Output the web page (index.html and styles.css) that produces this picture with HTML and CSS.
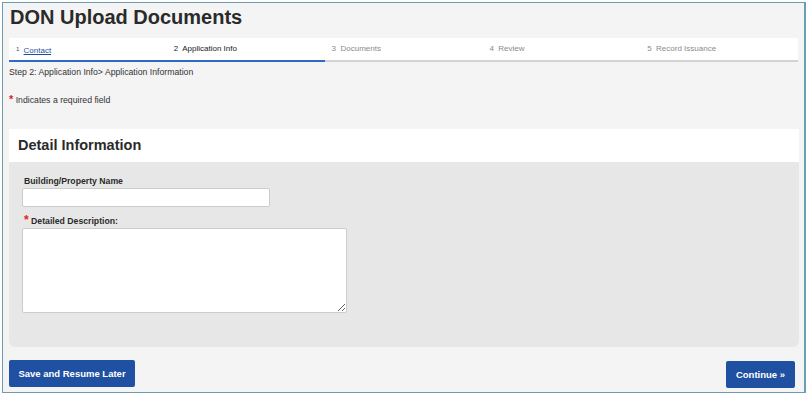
FILE: index.html
```
<!DOCTYPE html>
<html lang="en">
  <head>
    <meta charset="UTF-8">
    <title>DON Upload Documents</title>
    <link rel="stylesheet" href="styles.css">
  </head>
  <body>
    <div class="frame">
      <h1>DON Upload Documents</h1>
      <div class="steps">
        <div class="step done"><sup>1</sup> <a href="#">Contact</a></div>
        <div class="step current">2&nbsp; Application Info</div>
        <div class="step">3&nbsp; Documents</div>
        <div class="step">4&nbsp; Review</div>
        <div class="step">5&nbsp; Record Issuance</div>
      </div>
      <div class="crumb">Step 2: Application Info&gt; Application Information</div>
      <div class="required"><span class="star">*</span> Indicates a required field</div>

      <div class="section">
        <div class="section-head"><h2>Detail Information</h2></div>
        <div class="section-body">
          <label class="field-label">Building/Property Name</label>
          <input class="text-input" type="text">
          <label class="field-label desc-label"><span class="star">*</span> Detailed Description:</label>
          <textarea class="text-area"></textarea>
        </div>
      </div>

      <div class="actions">
        <button class="btn">Save and Resume Later</button>
        <button class="btn btn-continue">Continue &raquo;</button>
      </div>
    </div>
  </body>
</html>
```
FILE: styles.css
```
body {
  margin: 0;
  background-color: #ffffff;
  font-family: "Liberation Sans", Arial, sans-serif;
  color: #333333;
}

.frame {
  margin: 2px 2px 0 2px;
  height: 391px;
  box-sizing: border-box;
  border: 1px solid #6b9cb4;
  border-right-width: 2px;
  background-color: #f4f4f4;
  padding: 3px 5px 0 6px;
  display: flex;
  flex-direction: column;
}

h1 {
  margin: 0 0 0 1px;
  font-size: 20px;
  line-height: 23px;
  font-weight: bold;
  color: #2a2a2a;
}

.steps {
  display: flex;
  margin-top: 9px;
  background-color: #ffffff;
  height: 22px;
  border-bottom: 2px solid #d3d3d3;
  margin-right: 1px;
  position: relative;
}
.steps::after {
  content: "";
  position: absolute;
  left: 0;
  bottom: -2px;
  width: 316px;
  height: 2px;
  background-color: #2f6bc5;
}
.step {
  flex: 1;
  font-size: 8px;
  line-height: 22px;
  padding-left: 7px;
  color: #8a8a8a;
}
.step sup {
  font-size: 6px;
  vertical-align: 2px;
  color: #1d4f9e;
}
.step a:link, .step a:visited {
  color: #1d4f9e;
  margin-left: 2px;
}
.step.current {
  color: #222222;
}

.crumb {
  font-size: 8.7px;
  margin-top: 4px;
  line-height: 12px;
  color: #333333;
}

.required {
  font-size: 8.7px;
  margin-top: 15px;
  line-height: 12px;
  color: #333333;
}
.star {
  color: #e0202a;
  font-weight: bold;
  font-size: 11px;
}

.section {
  margin-top: 23px;
}
.section-head {
  background-color: #ffffff;
  height: 33px;
  padding-left: 9px;
}
.section-head h2 {
  margin: 0;
  font-size: 14.5px;
  line-height: 33px;
  color: #2a2a2a;
}
.section-body {
  background-color: #e7e7e7;
  border-radius: 0 0 6px 6px;
  height: 185px;
  box-sizing: border-box;
  padding: 14px 0 0 13px;
  display: flex;
  flex-direction: column;
  align-items: flex-start;
}
.field-label {
  font-size: 8.7px;
  font-weight: bold;
  line-height: 11px;
  margin-left: 2px;
  color: #2a2a2a;
}
.desc-label {
  margin-top: 8px;
}
.desc-label .star {
  font-size: 12px;
}
.text-input {
  margin-top: 1px;
  width: 248px;
  height: 19px;
  box-sizing: border-box;
  border: 1px solid #cccccc;
  border-radius: 2px;
  background-color: #ffffff;
}
.text-area {
  margin-top: 1px;
  width: 325px;
  height: 85px;
  box-sizing: border-box;
  border: 1px solid #cccccc;
  border-radius: 2px;
  background-color: #ffffff;
  resize: both;
}

.actions {
  display: flex;
  justify-content: space-between;
  margin-top: 13px;
  padding-right: 4px;
}
.btn {
  background-color: #1f50a1;
  color: #ffffff;
  border: 0;
  border-radius: 2px;
  font-family: "Liberation Sans", Arial, sans-serif;
  font-weight: bold;
  font-size: 9.5px;
  height: 27px;
  width: 126px;
  padding: 0;
  cursor: pointer;
}
.btn-continue {
  width: 69px;
  margin-top: 1px;
}
```
